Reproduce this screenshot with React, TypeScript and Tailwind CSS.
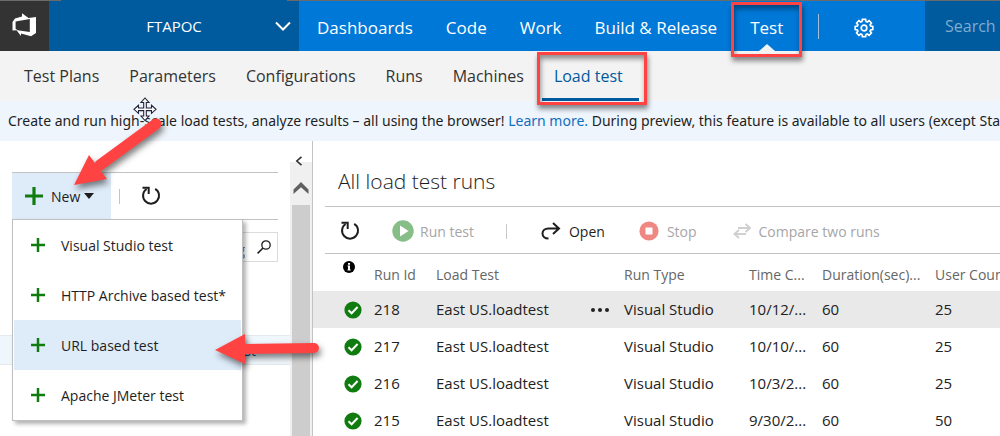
import type { ReactNode } from "react";

const hubs = ["Dashboards", "Code", "Work", "Build & Release", "Test"];
const tabs = ["Test Plans", "Parameters", "Configurations", "Runs", "Machines", "Load test"];
const newItems = ["Visual Studio test", "HTTP Archive based test*", "URL based test", "Apache JMeter test"];
const columns = ["Run Id", "Load Test", "Run Type", "Time C...", "Duration(sec)...", "User Count"];
const runs = [
  { id: "218", name: "East US.loadtest", type: "Visual Studio", time: "10/12/...", duration: 60, users: 25 },
  { id: "217", name: "East US.loadtest", type: "Visual Studio", time: "10/10/...", duration: 60, users: 25 },
  { id: "216", name: "East US.loadtest", type: "Visual Studio", time: "10/3/2...", duration: 60, users: 25 },
  { id: "215", name: "East US.loadtest", type: "Visual Studio", time: "9/30/2...", duration: 60, users: 50 },
];

function Highlight({ className }: { className: string }) {
  return (
    <span
      className={`pointer-events-none absolute z-20 border-3 border-[#ff4343] shadow-[1px_4px_5px_rgba(0,0,0,0.45),inset_1px_4px_5px_rgba(0,0,0,0.4)] ${className}`}
    />
  );
}

function Logo() {
  return (
    <svg width="25" height="26" viewBox="0 0 25 26" aria-hidden="true">
      <path
        fill="#fff"
        fillRule="evenodd"
        d="M.5 9 3 5.500 10 3.500V.3l6.500 4.700L24 4v16l-5 3.200-10-2.700V23L4.500 17.300.5 17.600ZM3.600 8.600v7.200l2 1.500 12.200 1.700V6Z"
      />
    </svg>
  );
}

function Gear() {
  return (
    <svg width="20" height="20" viewBox="0 0 20 20" fill="none" stroke="#fff" strokeWidth="1.7" aria-hidden="true">
      <path d="M8.4 1.3h3.2l.4 2.2 1.2.5 1.9-1.3 2.3 2.3-1.3 1.9.5 1.2 2.2.4v3l-2.2.4-.5 1.2 1.3 1.9-2.3 2.3-1.9-1.3-1.2.5-.4 2.2H8.4L8 16.500l-1.200-.5-1.900 1.300-2.300-2.300 1.300-1.900-.5-1.200-2.200-.4v-3l2.200-.4.5-1.200-1.300-1.900 2.300-2.300L6.800 4 8 3.500Z" />
      <circle cx="10" cy="10" r="2.8" />
    </svg>
  );
}

function Refresh() {
  return (
    <svg width="20" height="20" viewBox="0 0 20 20" fill="none" stroke="#1e1e1e" aria-hidden="true">
      <path strokeWidth="2" d="M14.200 2.800A8 8 0 1 1 5.600 3" />
      <path strokeWidth="2" d="M1.500 1.800h6.200V8" />
    </svg>
  );
}

function Plus({ size }: { size: number }) {
  return (
    <svg width={size} height={size} viewBox="0 0 18 18" aria-hidden="true">
      <path fill="#107c10" d="M7.400 0h3.200v7.400H18v3.200h-7.400V18H7.400v-7.400H0V7.400h7.400Z" />
    </svg>
  );
}

function Tick() {
  return (
    <svg width="18" height="18" viewBox="0 0 18 18" className="ml-[31px] block" role="img" aria-label="Passed">
      <circle cx="9" cy="9" r="8.600" fill="#107c10" />
      <path d="M4.500 9.300 7.600 12.300 13.600 6" fill="none" stroke="#fff" strokeWidth="2" />
    </svg>
  );
}

function ToolButton({ children, disabled, className }: { children: ReactNode; disabled?: boolean; className?: string }) {
  return (
    <button
      type="button"
      disabled={disabled}
      className={`flex items-center whitespace-nowrap disabled:text-[#a6a6a6] ${className ?? ""}`}
    >
      {children}
    </button>
  );
}

function TopBar() {
  return (
    <header className="flex h-[51px] shrink-0 border-t border-[#6b6b6b] bg-[#0078d7] text-white">
      <a href="#home" aria-label="Home" className="flex w-[49px] shrink-0 items-center justify-center bg-[#333]">
        <Logo />
      </a>
      <button type="button" className="relative flex w-[250px] shrink-0 items-center bg-[#005a9e] pr-2 pl-6 text-[15px]">
        <span className="absolute inset-x-3 -top-px h-px bg-[#005a9e]" />
        <span className="grow text-center">FTAPOC</span>
        <svg width="16" height="10" viewBox="0 0 16 10" fill="none" stroke="#fff" strokeWidth="2" aria-hidden="true">
          <path d="M1 1.500 8 8.500 15 1.500" />
        </svg>
      </button>
      <nav className="flex grow items-center gap-[33px] pl-[18px] text-[17px] whitespace-nowrap">
        {hubs.map((hub) => (
          <a key={hub} href={`#${hub}`} className="relative flex h-full items-center pt-1">
            {hub}
            {hub === "Test" && (
              <>
                <span className="absolute bottom-0 left-1/2 -translate-x-1/2 border-x-8 border-b-7 border-x-transparent border-b-[#f3f3f3]" />
                <Highlight className="-inset-x-[19px] top-[1px] -bottom-[6px]" />
              </>
            )}
          </a>
        ))}
        <span className="ml-0.5 h-[25px] w-px bg-[#a5bfd8]" />
        <button type="button" aria-label="Settings" className="ml-0.5 pt-1">
          <Gear />
        </button>
      </nav>
      <input
        type="text"
        aria-label="Search"
        placeholder="Search"
        className="w-[75px] shrink-0 bg-[#005a9e] pl-5 text-[16px] placeholder:text-[#7fadd0]"
      />
    </header>
  );
}

function SubNav() {
  return (
    <nav className="flex h-[50px] shrink-0 items-center gap-[30px] bg-[#f3f3f3] px-6 text-[16px] whitespace-nowrap text-[#333]">
      {tabs.map((tab) =>
        tab === "Load test" ? (
          <a key={tab} href="#load" aria-current="page" className="relative flex h-full items-center text-[#005a9e]">
            {tab}
            <span className="absolute -inset-x-4 bottom-0 left-[-12px] h-[3px] bg-[#005a9e]" />
            <Highlight className="top-[1px] -right-6 -bottom-[4px] -left-[17px]" />
          </a>
        ) : (
          <a key={tab} href={`#${tab}`}>
            {tab}
          </a>
        ),
      )}
    </nav>
  );
}

function NewMenu() {
  return (
    <ul
      role="menu"
      className="absolute top-full left-0 z-10 w-[231px] border border-[#bfbfbf] bg-white shadow-[3px_3px_4px_rgba(0,0,0,0.3)]"
    >
      {newItems.map((item) => (
        <li key={item} role="none">
          <button
            type="button"
            role="menuitem"
            className={`flex h-[50px] w-full items-center gap-4 border-x border-transparent bg-clip-padding pl-[17px] text-[14px] whitespace-nowrap ${item === "URL based test" ? "bg-[#deebf9]" : ""}`}
          >
            <Plus size={14} />
            {item}
          </button>
        </li>
      ))}
    </ul>
  );
}

function Sidebar() {
  return (
    <aside className="relative flex w-[313px] shrink-0 border-r border-[#c3c3c3]">
      <div className="min-w-0 grow pt-[31px]">
        <div className="relative mr-3 ml-3 flex h-[48px] items-stretch border-y border-[#c3c3c3]">
          <button type="button" aria-expanded="true" className="flex w-[99px] items-center bg-[#deebf9] pl-[13px] text-[14px]">
            <Plus size={18} />
            <span className="pl-2">New</span>
            <svg width="10" height="6" viewBox="0 0 10 6" className="ml-1" aria-hidden="true">
              <path d="M0 0h10L5 6Z" fill="#1e1e1e" />
            </svg>
          </button>
          <span className="ml-2 h-[15px] w-px self-center bg-[#c3c3c3]" />
          <button type="button" aria-label="Refresh" className="pl-[21px]">
            <Refresh />
          </button>
          <NewMenu />
        </div>
        <label className="mt-3 mr-3 ml-3 flex h-[30px] items-center justify-end border border-[#dcdcdc] pr-1.5">
          <input
            type="text"
            aria-label="Filter"
            placeholder="Find by tag"
            className="mr-3 min-w-0 grow pt-1 text-right text-[14px] placeholder:text-[#767676]"
          />
          <svg width="14" height="14" viewBox="0 0 14 14" fill="none" stroke="#1e1e1e" aria-hidden="true">
            <circle cx="9" cy="5" r="4.200" strokeWidth="1.300" />
            <path d="M6 8 .6 13.400" strokeWidth="1.500" />
          </svg>
        </label>
        <a
          href="#test"
          className="mt-[73px] flex h-[30px] items-center justify-end border-y border-[#e3e9ef] bg-[#eff6fc] pr-[34px] text-[14px] text-[#005a9e]"
        >
          loadtest
        </a>
      </div>
      <div className="flex w-[22px] shrink-0 flex-col items-center bg-[#f0f0f0]">
        <button type="button" aria-label="Collapse" className="flex h-[21px] w-full items-end justify-center bg-white pr-1">
          <svg width="8" height="10" viewBox="0 0 8 10" className="-mb-1" fill="none" stroke="#333" strokeWidth="1.600" aria-hidden="true">
            <path d="M6.500 .8 1.800 5 6.500 9.200" />
          </svg>
        </button>
        <svg width="16" height="12" viewBox="0 0 16 12" className="mt-5 mb-[11px]" aria-hidden="true">
          <path d="M8 0 15.500 7.500V12L8 5.200.500 12V7.500Z" fill="#606060" />
        </svg>
        <div className="w-[18px] grow bg-[#cdcdcd]" />
      </div>
    </aside>
  );
}

function Toolbar() {
  return (
    <div className="ml-3 flex h-[48px] shrink-0 items-center border-y border-[#c3c3c3] pt-0.5 pl-[15px] text-[14px]">
      <button type="button" aria-label="Refresh runs">
        <Refresh />
      </button>
      <ToolButton disabled className="ml-8 gap-1.5">
        <svg width="22" height="22" viewBox="0 0 22 22" aria-hidden="true">
          <circle cx="11" cy="11" r="10.700" fill="#87be88" />
          <path d="M8 5.500v11L16.500 11Z" fill="#fff" />
        </svg>
        Run test
      </ToolButton>
      <span className="ml-8 h-[15px] w-px bg-[#c8c8c8]" />
      <ToolButton className="ml-[34px] gap-2">
        <svg width="20" height="18" viewBox="0 0 20 18" fill="none" stroke="#1e1e1e" strokeWidth="2" aria-hidden="true">
          <path d="M7.500 16.500C-.5 16.500-.5 6.500 7.500 6.500H18M12 1l6 5.500-6 5.500" />
        </svg>
        Open
      </ToolButton>
      <ToolButton disabled className="ml-[34px] gap-2">
        <svg width="20" height="20" viewBox="0 0 20 20" aria-hidden="true">
          <circle cx="10" cy="10" r="9.600" fill="#ef8883" />
          <path d="M6.500 6.500h7v7h-7Z" fill="#fff" />
        </svg>
        Stop
      </ToolButton>
      <ToolButton disabled className="ml-9 gap-2">
        <svg width="18" height="16" viewBox="0 0 18 16" fill="none" stroke="#d0d0d0" strokeWidth="2" aria-hidden="true">
          <path d="M5 5h12M12.500 1 17 5l-4.500 4M13 11H1.500M6 7l-4.500 4L6 15" />
        </svg>
        Compare two runs
      </ToolButton>
    </div>
  );
}

function RunsTable() {
  return (
    <table className="w-full min-w-[700px] table-fixed text-left text-[14px] whitespace-nowrap">
      <colgroup>
        <col className="w-[61px]" />
        <col className="w-[62px]" />
        <col className="w-[188px]" />
        <col className="w-[125px]" />
        <col className="w-[73px]" />
        <col className="w-[113px]" />
        <col />
      </colgroup>
      <thead>
        <tr className="h-[37px] text-[#666]">
          <th className="align-top">
            <svg width="12" height="12" viewBox="0 0 12 12" className="mt-[7px] ml-[30px]" role="img" aria-label="Status">
              <circle cx="6" cy="6" r="6" fill="#000" />
              <path d="M5 2h2v1.700H5ZM4.500 4.600H7v4h.7v1H4.500v-1H5v-3h-.5Z" fill="#fff" />
            </svg>
          </th>
          {columns.map((column) => (
            <th key={column} className="pt-1 font-normal">
              {column}
            </th>
          ))}
        </tr>
      </thead>
      <tbody className="text-[15px] text-[#222]">
        {runs.map((run, index) => (
          <tr key={run.id} className={index === 0 ? "h-[37px] bg-[#e9e9e9]" : "h-[37px]"}>
            <td>
              <Tick />
            </td>
            <td>{run.id}</td>
            <td>
              <div className="flex items-center justify-between pr-[15px]">
                {run.name}
                {index === 0 && (
                  <button type="button" aria-label="More actions">
                    <svg width="18" height="4" viewBox="0 0 18 4" fill="#222" aria-hidden="true">
                      <circle cx="2" cy="2" r="2" />
                      <circle cx="9" cy="2" r="2" />
                      <circle cx="16" cy="2" r="2" />
                    </svg>
                  </button>
                )}
              </div>
            </td>
            <td>{run.type}</td>
            <td>{run.time}</td>
            <td>{run.duration}</td>
            <td>{run.users}</td>
          </tr>
        ))}
      </tbody>
    </table>
  );
}

function Annotations() {
  return (
    <>
      <svg className="pointer-events-none absolute top-[97px] left-[133px] z-20" width="24" height="25" viewBox="0 0 24 25" aria-hidden="true">
        <path
          d="M12 1 16 5.500H13.300V11H18.500V8.300L23 12.300 18.500 16.300V13.600H13.300V19H16L12 23.500 8 19H10.700V13.600H5.500V16.300L1 12.300 5.500 8.300V11H10.700V5.500H8Z"
          fill="#fff"
          stroke="#22223a"
          strokeWidth="1.100"
        />
      </svg>
      <svg
        className="pointer-events-none absolute top-[110px] left-[66px] z-20 drop-shadow-[2px_4px_3px_rgba(0,0,0,0.5)]"
        width="104"
        height="84"
        viewBox="0 0 104 84"
        aria-hidden="true"
      >
        <path d="M90 14 34 55" stroke="#ff4343" strokeWidth="11" strokeLinecap="round" />
        <path d="M8 75 23 45 41 69Z" fill="#ff4343" />
      </svg>
      <svg
        className="pointer-events-none absolute top-[328px] left-[208px] z-20 drop-shadow-[2px_4px_3px_rgba(0,0,0,0.5)]"
        width="118"
        height="42"
        viewBox="0 0 118 42"
        aria-hidden="true"
      >
        <path d="M36 21 106 20" stroke="#ff4343" strokeWidth="10" strokeLinecap="round" />
        <path d="M7 22 37 6V36Z" fill="#ff4343" />
      </svg>
    </>
  );
}

export default function App() {
  return (
    <div className="relative flex h-screen flex-col overflow-hidden bg-white font-['Open_Sans','Noto_Sans',sans-serif] text-[#1e1e1e]">
      <TopBar />
      <SubNav />
      <p className="shrink-0 overflow-hidden bg-[#eff5fc] pl-2 font-['Noto_Sans','Open_Sans',sans-serif] text-[14px] leading-10 whitespace-nowrap">
        Create and run high-scale load tests, analyze results – all using the browser!{" "}
        <a href="#learn" className="text-[#106ebe]">
          Learn more.
        </a>{" "}
        During preview, this feature is available to all users (except Sta
      </p>
      <div className="flex min-h-0 grow">
        <Sidebar />
        <main className="flex min-w-0 grow flex-col overflow-hidden">
          <h1 className="flex h-[65px] shrink-0 items-center pt-4 pl-[25px] text-[21px] font-light">All load test runs</h1>
          <Toolbar />
          <RunsTable />
        </main>
      </div>
      <Annotations />
    </div>
  );
}
